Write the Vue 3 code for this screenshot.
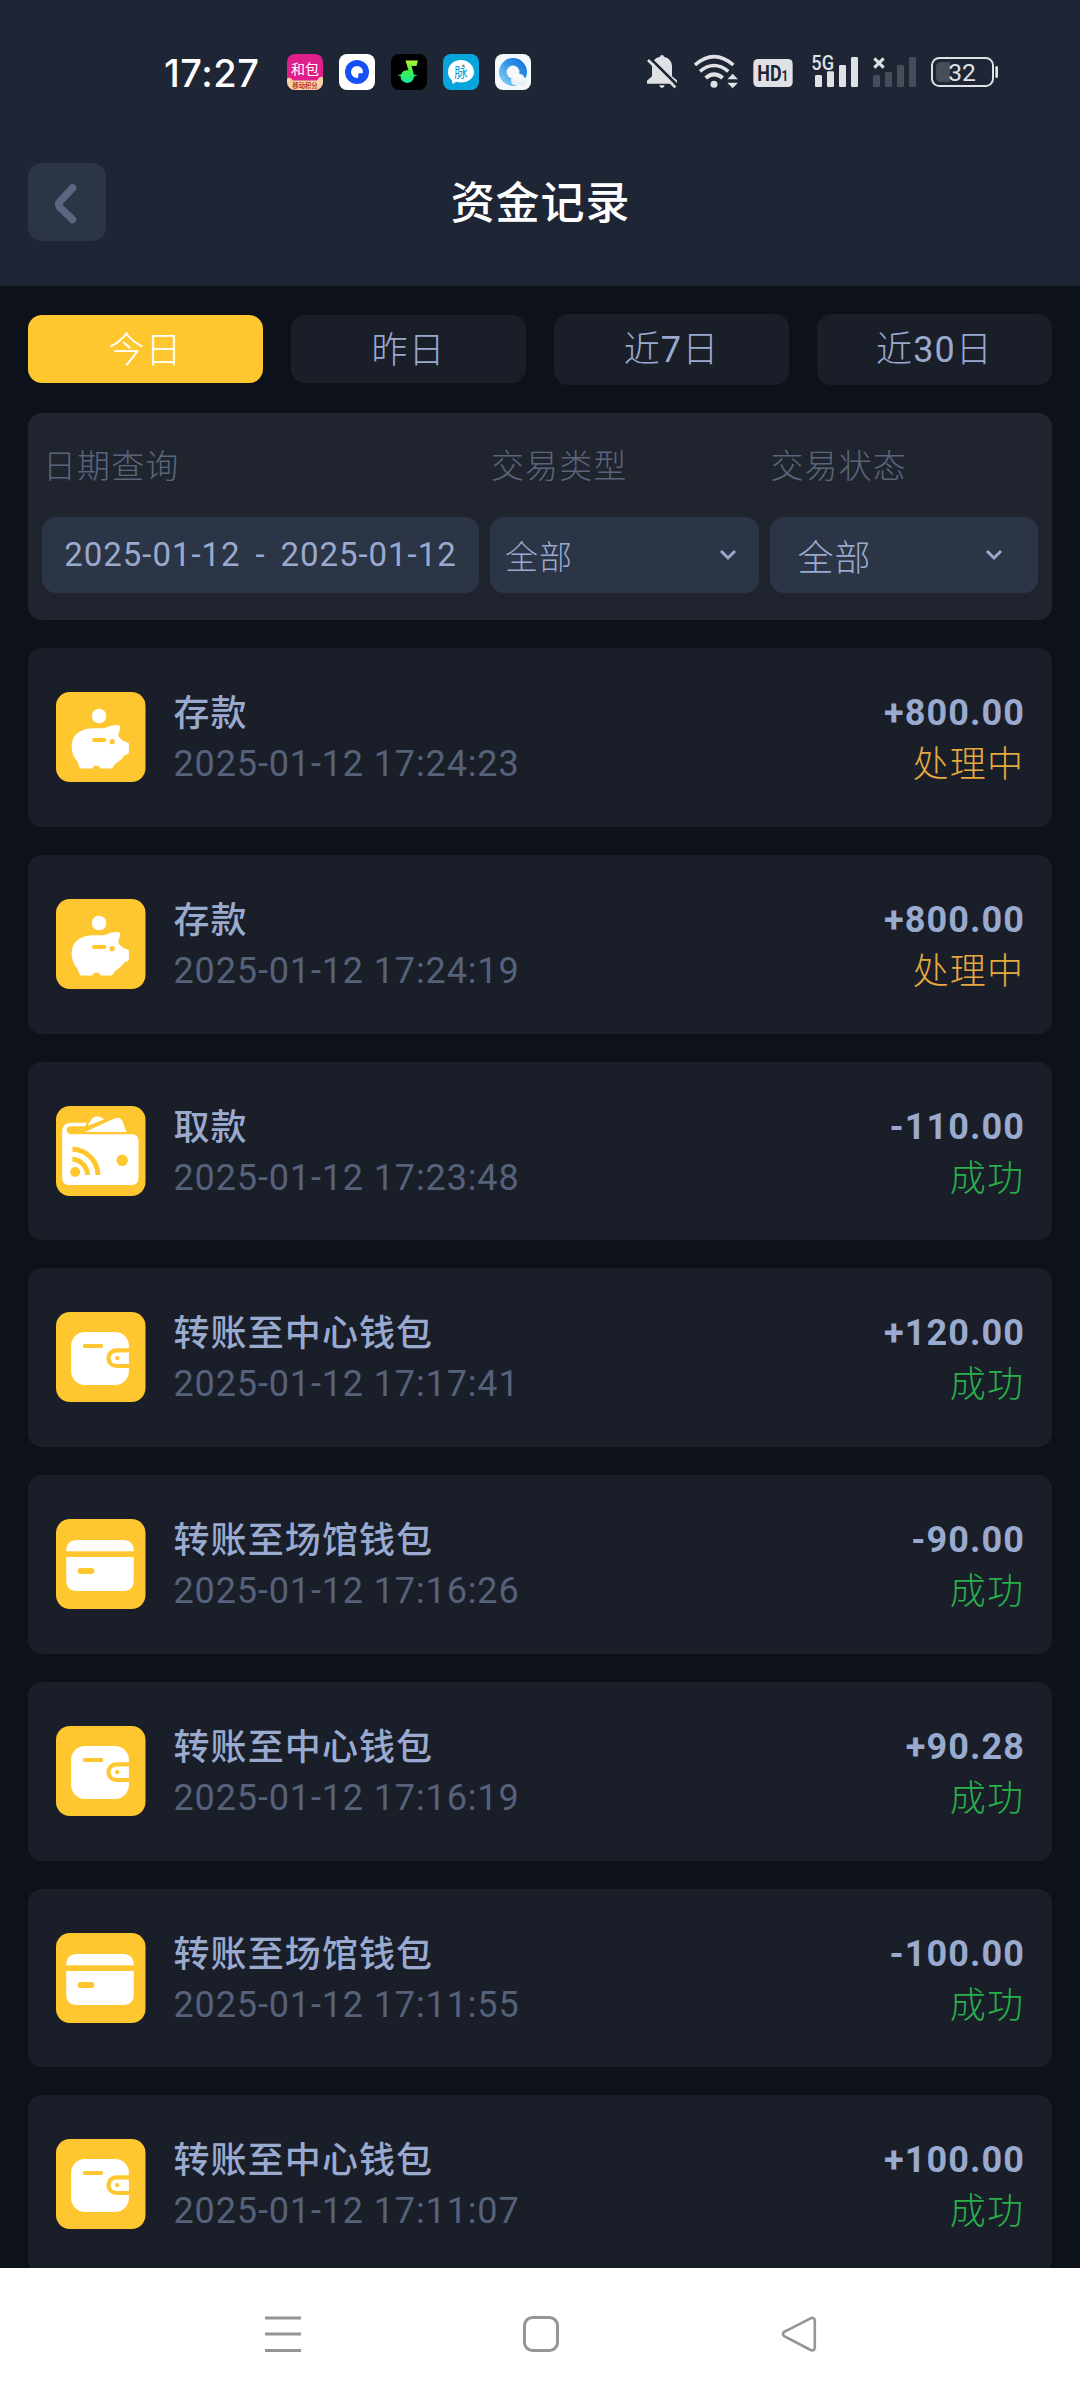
<script setup>
const tabs = [
  { pre: '今日', active: true },
  { pre: '昨日' },
  { pre: '近', num: '7', post: '日' },
  { pre: '近', num: '30', post: '日' },
]

const records = [
  { icon: 'deposit', title: '存款', time: '2025-01-12 17:24:23', amount: '+800.00', status: '处理中', pending: true },
  { icon: 'deposit', title: '存款', time: '2025-01-12 17:24:19', amount: '+800.00', status: '处理中', pending: true },
  { icon: 'withdraw', title: '取款', time: '2025-01-12 17:23:48', amount: '-110.00', status: '成功' },
  { icon: 'wallet', title: '转账至中心钱包', time: '2025-01-12 17:17:41', amount: '+120.00', status: '成功' },
  { icon: 'card', title: '转账至场馆钱包', time: '2025-01-12 17:16:26', amount: '-90.00', status: '成功' },
  { icon: 'wallet', title: '转账至中心钱包', time: '2025-01-12 17:16:19', amount: '+90.28', status: '成功' },
  { icon: 'card', title: '转账至场馆钱包', time: '2025-01-12 17:11:55', amount: '-100.00', status: '成功' },
  { icon: 'wallet', title: '转账至中心钱包', time: '2025-01-12 17:11:07', amount: '+100.00', status: '成功' },
]
</script>

<template>
  <div class="screen">
    <header class="top">
      <div class="statusbar">
        <span class="clock">17:27</span>
        <div class="apps">
          <svg viewBox="0 0 36 36">
            <defs><clipPath id="app1"><rect width="36" height="36" rx="8" /></clipPath></defs>
            <g clip-path="url(#app1)">
              <rect width="36" height="36" fill="#e01f8d" />
              <path d="M0 25Q3 22 6 26.500H30Q33 21 36 23.500V36H0Z" fill="#f6d3a4" />
              <text x="18" y="19.500" font-size="14" font-weight="400" text-anchor="middle" fill="#fff">和包</text>
              <text x="18" y="33.500" font-size="6.300" font-weight="700" text-anchor="middle" fill="#c4351f">移动积分</text>
            </g>
          </svg>
          <svg viewBox="0 0 36 36">
            <rect width="36" height="36" rx="8" fill="#fff" />
            <circle cx="18" cy="18" r="12" fill="#1650f5" />
            <path d="M18 12a6 6 0 1 0 0 12q1.300 0 1.300-1.500V20.500q0-1.200 1.300-1.200H23q1 0 1-1.300A6 6 0 0 0 18 12Z" fill="#fff" />
          </svg>
          <svg viewBox="0 0 36 36">
            <defs><linearGradient id="note" x2="0" y2="1"><stop offset="0" stop-color="#b4f52d" /><stop offset=".5" stop-color="#3ff04d" /><stop offset="1" stop-color="#12e8a4" /></linearGradient></defs>
            <rect width="36" height="36" rx="8" fill="#000" />
            <path d="M14.500 6.500H27L25.500 12H20.500L22.500 19L22.800 20.500L26.500 21.500L23 22.500A6.700 6.700 0 1 1 9.500 22L6 21.200L10 20.500A7 7 0 0 1 17.500 16.500Z" fill="url(#note)" />
          </svg>
          <svg viewBox="0 0 36 36">
            <rect width="36" height="36" rx="8" fill="#08a4dc" />
            <path d="M18 6C10.500 6 5 11 5 18c0 3.500 1.500 6.500 4 8.500L9.500 30l4-2.200c1.500.5 3 .7 4.500.7 7.500 0 13-4.500 13-10.500S25.500 6 18 6Z" fill="#fff" />
            <text x="18" y="22.500" font-size="13.500" text-anchor="middle" fill="#08a4dc">脉</text>
            <circle cx="20.500" cy="11.500" r="1" fill="#e3573c" />
          </svg>
          <svg viewBox="0 0 36 36">
            <defs>
              <linearGradient id="ring" x1="0" y1="1" x2="1" y2="0"><stop offset="0" stop-color="#7cc8f4" /><stop offset=".5" stop-color="#3a9cee" /><stop offset="1" stop-color="#1774dd" /></linearGradient>
              <linearGradient id="cloud" x2="0" y2="1"><stop offset="0" stop-color="#fff" /><stop offset="1" stop-color="#e3edf6" /></linearGradient>
            </defs>
            <rect width="36" height="36" rx="8" fill="#f5f8fb" />
            <circle cx="18" cy="18" r="10.200" fill="none" stroke="url(#ring)" stroke-width="7.500" />
            <path d="M19 31a4.500 4.500 0 0 1 0-8.500 6 6 0 0 1 10.500 1A4 4 0 0 1 30 31Z" fill="url(#cloud)" />
          </svg>
        </div>
        <div class="signals">
          <svg class="s-bell" viewBox="78 66 96 114" width="32" height="38">
            <path d="M120 80Q120 75 126 75T132 80Q155 86 156 108V139L171 151V161H81V152L96 139V108Q96 86 120 80ZM118 166H134Q133 174 126 174T118 166Z" fill="#dfe1e5" />
            <path d="M80 84L172 176" stroke="#1e2534" stroke-width="8" fill="none" transform="translate(5 -5)" />
            <path d="M84 90L166 172" stroke="#dfe1e5" stroke-width="8" fill="none" />
          </svg>
          <svg class="s-wifi" viewBox="220 66 138 114" width="46" height="38">
            <g fill="none" stroke="#dfe1e5" stroke-width="10.500">
              <path d="M226 105Q283 55 341 105" />
              <path d="M241 124Q283 89 326 124" />
              <path d="M258 144Q283 122 309 144" stroke-width="12" />
            </g>
            <circle cx="283" cy="163" r="10.500" fill="#dfe1e5" />
            <path d="M323 148H355L339 131ZM323 158H355L339 175Z" fill="#dfe1e5" />
          </svg>
          <svg class="s-hd" viewBox="399 66 120 114" width="40" height="38">
            <rect x="400" y="87" width="118" height="84" rx="14" fill="#dfe1e5" />
            <text transform="translate(412 153) scale(.8 1)" font-size="67" font-weight="700" fill="#1e2534">HD<tspan font-size="44">1</tspan></text>
          </svg>
          <svg class="s-5g" viewBox="573 66 144 114" width="48" height="38">
            <g fill="#dfe1e5">
              <rect x="585" y="135" width="21" height="36" rx="4" />
              <rect x="621" y="124" width="21" height="47" rx="4" />
              <rect x="657" y="105" width="21" height="66" rx="4" />
              <rect x="693" y="81" width="21" height="90" rx="4" />
              <text x="574" y="119" font-size="58" font-weight="500" stroke="#1e2534" stroke-width="6" paint-order="stroke" textLength="68" lengthAdjust="spacingAndGlyphs">5G</text>
            </g>
          </svg>
          <svg class="s-none" viewBox="756 66 135 114" width="45" height="38">
            <g fill="#474c59">
              <rect x="759" y="135" width="21" height="36" rx="4" />
              <rect x="795" y="126" width="21" height="45" rx="4" />
              <rect x="831" y="105" width="21" height="66" rx="4" />
              <rect x="867" y="81" width="21" height="90" rx="4" />
            </g>
            <path d="M763 85L791 113M791 85L763 113" stroke="#dfe1e5" stroke-width="9" fill="none" />
          </svg>
          <svg class="s-batt" viewBox="930 66 207 114" width="69" height="38">
            <path d="M964 96H990V157H964Q948 157 948 141V112Q948 96 964 96Z" fill="#474c59" />
            <rect x="936" y="84" width="183" height="84" rx="22" fill="none" stroke="#dfe1e5" stroke-width="6" />
            <rect x="1126" y="108" width="8" height="36" rx="4" fill="#dfe1e5" />
            <text x="1026" y="154" font-size="74" text-anchor="middle" fill="#dfe1e5">32</text>
          </svg>
        </div>
      </div>
      <div class="titlebar">
        <button class="back" aria-label="back">
          <svg viewBox="0 0 78 78" width="78" height="78"><path d="M44.500 25L32 38.500Q29.500 41.500 32 44.500L44.500 56.500" fill="none" stroke="#5b6780" stroke-width="7.500" stroke-linecap="round" stroke-linejoin="round" /></svg>
        </button>
        <h1>资金记录</h1>
        <span class="side"></span>
      </div>
    </header>

    <main>
      <nav class="tabs">
        <button v-for="(t, i) in tabs" :key="i" :class="{ active: t.active, tall: t.num }">
          <span>{{ t.pre }}<b v-if="t.num">{{ t.num }}</b>{{ t.post }}</span>
        </button>
      </nav>

      <section class="filter">
        <div class="field date">
          <label>日期查询</label>
          <div class="box range"><span>2025-01-12</span><span>-</span><span>2025-01-12</span></div>
        </div>
        <div class="field">
          <label>交易类型</label>
          <div class="box select"><span>全部</span>
            <svg viewBox="0 0 18 12" width="18" height="12"><path d="M2 2L9 9L16 2" /></svg>
          </div>
        </div>
        <div class="field">
          <label>交易状态</label>
          <div class="box select wide"><span>全部</span>
            <svg viewBox="0 0 18 12" width="18" height="12"><path d="M2 2L9 9L16 2" /></svg>
          </div>
        </div>
      </section>

      <section class="list">
        <article v-for="(r, i) in records" :key="i" class="record">
          <svg class="icon" viewBox="0 0 90 90" preserveAspectRatio="none">
            <rect width="90" height="90" rx="14" fill="#ffc72f" />
            <template v-if="r.icon === 'deposit'">
              <circle cx="43.300" cy="24" r="7.300" fill="#fff" />
              <path d="M15.800 55C15.800 42 25 36.300 39 36.300H46C52 36.300 52 33 62 33Q65 33.200 64.400 36.500L62.500 43.500C64 46 66 48 68 49L72 50.500Q73.300 50.800 73.300 52V60.500Q73.300 61.500 72 62L68.500 63.700C65.500 68 61.500 70.500 59 72.500L57 75.500Q56.600 76.600 55 76.600H45.500Q44 76.600 43.700 75Q43.500 73.800 42 73.800H39Q37.700 73.800 37.500 75Q37.300 76.600 35.500 76.600H26Q24 76.600 23.500 75L21.500 69.500C18 66 15.800 60 15.800 55Z" fill="#fff" />
              <rect x="36.200" y="46" width="14.500" height="4" rx="2" fill="#ffc72f" />
              <circle cx="56.500" cy="49.700" r="2.600" fill="#ffc72f" />
            </template>
            <template v-else-if="r.icon === 'withdraw'">
              <path d="M6.200 28V26Q6.200 16.700 15.500 16.700H31L29 20.300H15.500Q10.700 20.300 10.700 24T15 28.300H76Q83 28.300 83 35V72Q83 79 76 79H13.200Q6.200 79 6.200 72Z" fill="#fff" />
              <path d="M32 19L36.500 12.500Q40 9 44 10.700L48.500 13.300L33 19.500Z" fill="#fff" />
              <path d="M29.300 26L58.500 12.600Q64 10.300 66.500 14.500L70.800 26Z" fill="#fff" />
              <g fill="none" stroke="#ffc72f" stroke-width="5">
                <path d="M16.500 43.300A26 26 0 0 1 42.200 69" />
                <path d="M16.500 53.300A16 16 0 0 1 31.700 69" />
              </g>
              <circle cx="19.300" cy="66" r="5" fill="#ffc72f" />
              <circle cx="66.500" cy="54.300" r="5.800" fill="#ffc72f" />
            </template>
            <template v-else-if="r.icon === 'wallet'">
              <rect x="15.200" y="20" width="58.100" height="53" rx="14" fill="#fff" />
              <rect x="26.900" y="32" width="20.600" height="4" rx="2" fill="#ffc72f" />
              <path d="M73.500 36.300H60.500A9.850 9.850 0 0 0 60.500 56H73.500Z" fill="#ffc72f" />
              <path d="M73.300 40.600H60.600A5.700 5.700 0 0 0 60.600 52H73.300Z" fill="#fff" />
              <circle cx="61.600" cy="46.100" r="2.200" fill="#ffc72f" />
            </template>
            <template v-else>
              <path d="M10.300 32.300Q10.300 21 21.300 21H67.200Q78.200 21 78.200 32.300ZM10.300 38H78.200V61Q78.200 72 67.200 72H21.300Q10.300 72 10.300 61Z" fill="#fff" />
              <rect x="21.700" y="49" width="16.900" height="6" rx="3" fill="#ffc72f" />
            </template>
          </svg>
          <div class="info">
            <div class="name">{{ r.title }}</div>
            <div class="time">{{ r.time }}</div>
          </div>
          <div class="result">
            <div class="amount">{{ r.amount }}</div>
            <div class="state" :class="{ pending: r.pending }">{{ r.status }}</div>
          </div>
        </article>
      </section>
    </main>

    <footer class="navbar">
      <svg viewBox="0 0 36 36"><path d="M0 2H36M0 18H36M0 34.500H36" stroke-width="3" /></svg>
      <svg viewBox="0 0 36 36"><rect x="1.500" y="1.500" width="33" height="33" rx="8" stroke-width="3" /></svg>
      <svg viewBox="0 0 36 36"><path d="M29.600 2.300L3.200 15.800Q.8 18 3.200 20.200L29.600 34Q33.500 35.500 33.800 31.500V4.500Q33.500 .8 29.600 2.300Z" stroke-width="2.600" /></svg>
    </footer>
  </div>
</template>

<style>
body {
  margin: 0;
  background: #0d1119;
}
</style>

<style scoped>
* {
  box-sizing: border-box;
}
.screen {
  display: flex;
  flex-direction: column;
  width: 1080px;
  height: 2400px;
  overflow: hidden;
  background: #0d1119;
  color: #99aace;
  font-family: Roboto, "Noto Sans CJK SC", sans-serif;
  letter-spacing: 1.100px;
}
svg {
  display: block;
  flex: none;
  letter-spacing: 0;
}
button {
  border: 0;
  padding: 0;
  font: inherit;
  letter-spacing: inherit;
  color: inherit;
}
.top {
  height: 286px;
  flex: none;
  background: #1e2534;
}
.statusbar {
  display: flex;
  align-items: center;
  height: 144px;
  padding-left: 164px;
}
.clock {
  width: 123px;
  padding-top: 1px;
  color: #fff;
  font-size: 38px;
  font-weight: 450;
  line-height: 44px;
  letter-spacing: 0.500px;
  font-family: Inter, Roboto, sans-serif;
}
.apps {
  display: flex;
  gap: 16px;
}
.apps svg {
  width: 36px;
  height: 36px;
}
.signals {
  display: flex;
  margin-left: 115px;
  margin-top: -2px;
}
.s-wifi { margin-left: 15.300px; }
.s-hd { margin-left: 13.700px; }
.s-5g { margin-left: 18px; }
.s-none { margin-left: 13px; }
.s-batt { margin-left: 13px; }
.titlebar {
  display: flex;
  align-items: center;
  justify-content: space-between;
  height: 116px;
  padding: 0 27px 0 28px;
}
.back,
.side {
  width: 78px;
  height: 78px;
}
.back {
  border-radius: 14px;
  background: #2c3545;
}
h1 {
  margin: 0;
  padding-top: 4px;
  color: #fff;
  font-size: 44px;
  font-weight: 500;
  line-height: 60px;
  letter-spacing: 0.900px;
}
main {
  flex: 1;
  min-height: 0;
  overflow: hidden;
  padding: 28px 28px 0;
}
.tabs {
  display: flex;
  align-items: flex-start;
  gap: 28px;
  height: 71px;
}
.tabs button {
  flex: 1;
  height: 68px;
  margin-top: 1px;
  padding: 4px 0 0;
  border-radius: 14px;
  background: #1a1e29;
  font-size: 36px;
  font-weight: 300;
  line-height: 52px;
}
.tabs button.tall {
  height: 71px;
  margin-top: 0;
  padding-top: 0;
}
.tabs b {
  font-weight: 400;
}
.tabs button.active {
  background: #ffc72f;
  color: #fff;
}
.filter {
  display: flex;
  gap: 11px;
  height: 207px;
  margin-top: 28px;
  padding: 0 14px;
  border-radius: 14px;
  background: #20242f;
}
.field {
  width: 268.500px;
}
.field.date {
  width: 437px;
}
.field label {
  display: block;
  height: 103.500px;
  padding-left: 1px;
  font-size: 33px;
  font-weight: 300;
  line-height: 107px;
  color: #5a657b;
}
.box {
  display: flex;
  align-items: center;
  height: 76px;
  border-radius: 14px;
  background: #2c3545;
  font-size: 33px;
}
.range {
  justify-content: center;
  gap: 15px;
  letter-spacing: 0.950px;
}
.select {
  justify-content: space-between;
  padding: 0 22px 0 15px;
  font-weight: 300;
}
.select.wide {
  padding: 0 35px 0 28px;
  font-size: 36px;
}
.select path {
  fill: none;
  stroke: #99aace;
  stroke-width: 3;
}
.list {
  display: flex;
  flex-direction: column;
  gap: 28px;
  margin-top: 28px;
}
.record {
  display: flex;
  align-items: flex-start;
  flex: none;
  height: 178.750px;
  padding: 44px 28px 0;
  border-radius: 14px;
  background: #1a1e29;
}
.icon {
  width: 89.500px;
  height: 90px;
}
.info {
  flex: 1;
  margin-left: 28px;
}
.result {
  text-align: right;
}
.name,
.time,
.amount,
.state {
  height: 51px;
  line-height: 51px;
  margin-top: -3px;
  font-size: 36px;
}
.time,
.state {
  margin-top: 0;
}
.name {
  font-weight: 500;
}
.time {
  margin-top: -1px;
  color: #56617a;
  letter-spacing: 0.870px;
}
.amount {
  margin-top: -4px;
  margin-right: -1px;
  font-weight: 700;
}
.state {
  padding-top: 1px;
  font-weight: 300;
  color: #27b04b;
}
.state.pending {
  color: #e5a93f;
}
.navbar {
  display: flex;
  justify-content: center;
  gap: 222px;
  height: 132px;
  padding: 48px 0 0 2px;
  flex: none;
  background: #fff;
}
.navbar svg {
  width: 36px;
  height: 36px;
  fill: none;
  stroke: #959595;
}
</style>
